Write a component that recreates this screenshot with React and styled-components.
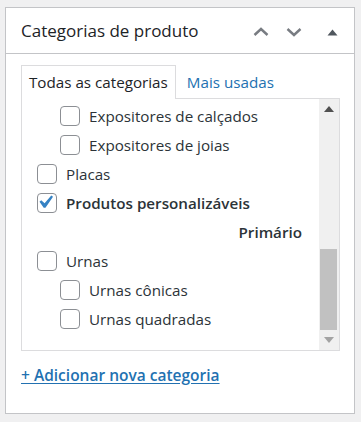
import React from "react";
import styled, { createGlobalStyle } from "styled-components";

const GlobalStyle = createGlobalStyle`
  html, body { margin: 0; padding: 0; }
  body {
    background: #f0f0f1;
    font-family: "Open Sans", "Noto Sans", sans-serif;
    color: #1d2327;
  }
`;

const Panel = styled.section`
  margin: 7px 6px 0 5px;
  background: #fff;
  border: 1px solid #c3c4c7;
  box-sizing: border-box;
`;

const Header = styled.div`
  display: flex;
  align-items: center;
  height: 45px;
  border-bottom: 1px solid #c3c4c7;
  padding-left: 15px;
`;

const Title = styled.h2`
  flex: 1;
  min-width: 0;
  margin: 0;
  font-size: 17px;
  font-weight: 400;
  color: #1d2327;
  white-space: nowrap;
`;

const HeaderButton = styled.button`
  display: flex;
  align-items: center;
  justify-content: center;
  flex-shrink: 0;
  width: ${(p) => p.$w}px;
  height: 45px;
  padding: 3px 0 0;
  border: 0;
  background: none;
  cursor: pointer;
`;

const Body = styled.div`
  padding: 11px 14px 27px 15px;
`;

const Tabs = styled.ul`
  display: flex;
  gap: 3px;
  margin: 0;
  padding: 0;
  list-style: none;
`;

const Tab = styled.li`
  height: 34px;
  box-sizing: border-box;
  padding: 0 7px;
  margin-bottom: -1px;
  border: 1px solid ${(p) => (p.$active ? "#dcdcde" : "transparent")};
  border-bottom: 0;
  background: ${(p) => (p.$active ? "#fff" : "transparent")};
  font-size: 15.2px;
  line-height: 32px;
  white-space: nowrap;
  color: ${(p) => (p.$active ? "#1d2327" : "#2271b1")};
  cursor: pointer;
  position: relative;
  z-index: 1;
`;

const ListBox = styled.div`
  display: flex;
  height: 253px;
  box-sizing: border-box;
  border: 1px solid #dcdcde;
  background: #fff;
`;

const ListViewport = styled.div`
  flex: 1;
  min-width: 0;
  display: flex;
  flex-direction: column;
  justify-content: flex-end;
  overflow: hidden;
  padding: 0 17px 17px 0;
`;

const CheckList = styled.ul`
  margin: 0;
  padding: 0;
  list-style: none;
  flex-shrink: 0;
`;

const Item = styled.li`
  display: flex;
  align-items: center;
  height: 29px;
  padding-left: ${(p) => 15 + p.$level * 23}px;
  font-size: 15.2px;
  font-weight: ${(p) => (p.$bold ? 600 : 400)};
  color: #2c3338;
  white-space: nowrap;
`;

const PrimaryRow = styled.li`
  display: flex;
  align-items: center;
  justify-content: flex-end;
  height: 29px;
  font-size: 15.2px;
  font-weight: 600;
  color: #2c3338;
`;

const Box = styled.span`
  flex-shrink: 0;
  width: 20px;
  height: 20px;
  box-sizing: border-box;
  border: 1px solid #8c8f94;
  border-radius: 4px;
  background: #fff;
  margin-right: 9px;
  display: flex;
  align-items: center;
  justify-content: center;
  overflow: visible;
`;

const Scrollbar = styled.div`
  width: 20px;
  flex-shrink: 0;
  display: flex;
  flex-direction: column;
  background: #f0f0f0;
`;

const ArrowButton = styled.div`
  height: 20px;
  flex-shrink: 0;
  display: flex;
  align-items: center;
  justify-content: center;
`;

const Track = styled.div`
  flex: 1;
  display: flex;
  flex-direction: column;
  justify-content: flex-end;
`;

const Thumb = styled.div`
  height: 81px;
  margin: 0 2px 0 1px;
  background: #c1c1c1;
`;

const AddLink = styled.a`
  display: inline-block;
  margin-top: 14px;
  font-size: 15.5px;
  line-height: 21px;
  font-weight: 600;
  color: #2271b1;
  text-decoration: underline;
  text-underline-offset: 2px;
  white-space: nowrap;
  cursor: pointer;
`;

const Chevron = ({ down }) => (
  <svg width="16" height="10" viewBox="0 0 16 10">
    <polyline
      points={down ? "1.5,2 8,8 14.5,2" : "1.5,8 8,2 14.5,8"}
      fill="none"
      stroke="#787c82"
      strokeWidth="2.4"
    />
  </svg>
);

const Caret = () => (
  <svg width="11" height="7" viewBox="0 0 11 7">
    <polygon points="0.5,6.5 5.5,0.5 10.5,6.5" fill="#50575e" />
  </svg>
);

const ScrollArrow = ({ down, color }) => (
  <svg width="10" height="6" viewBox="0 0 10 6">
    <polygon points={down ? "0,0 10,0 5,6" : "0,6 10,6 5,0"} fill={color} />
  </svg>
);

const Check = () => (
  <svg width="20" height="20" viewBox="3.85 2.88 15.38 15.38" style={{ overflow: "visible" }}>
    <path d="M14.83 4.89l1.34.94-5.81 8.38H9.02L5.78 9.67l1.34-1.25 2.57 2.4z" fill="#3582c4" />
  </svg>
);

const items = [
  { label: "Expositores de calçados", level: 1 },
  { label: "Expositores de joias", level: 1 },
  { label: "Placas", level: 0 },
  { label: "Produtos personalizáveis", level: 0, checked: true, primary: true },
  { label: "Urnas", level: 0 },
  { label: "Urnas cônicas", level: 1 },
  { label: "Urnas quadradas", level: 1 },
];

export default function App() {
  return (
    <>
      <GlobalStyle />
      <Panel>
        <Header>
          <Title>Categorias de produto</Title>
          <HeaderButton $w={33} aria-label="Mover para cima">
            <Chevron />
          </HeaderButton>
          <HeaderButton $w={33} aria-label="Mover para baixo">
            <Chevron down />
          </HeaderButton>
          <HeaderButton $w={44} aria-label="Alternar painel">
            <Caret />
          </HeaderButton>
        </Header>
        <Body>
          <Tabs>
            <Tab $active>Todas as categorias</Tab>
            <Tab>Mais usadas</Tab>
          </Tabs>
          <ListBox>
            <ListViewport>
              <CheckList>
                {items.map((it) => (
                  <React.Fragment key={it.label}>
                    <Item $level={it.level} $bold={it.checked}>
                      <Box>{it.checked && <Check />}</Box>
                      {it.label}
                    </Item>
                    {it.primary && <PrimaryRow>Primário</PrimaryRow>}
                  </React.Fragment>
                ))}
              </CheckList>
            </ListViewport>
            <Scrollbar>
              <ArrowButton>
                <ScrollArrow color="#505050" />
              </ArrowButton>
              <Track>
                <Thumb />
              </Track>
              <ArrowButton>
                <ScrollArrow down color="#a3a3a3" />
              </ArrowButton>
            </Scrollbar>
          </ListBox>
          <AddLink>+ Adicionar nova categoria</AddLink>
        </Body>
      </Panel>
    </>
  );
}
